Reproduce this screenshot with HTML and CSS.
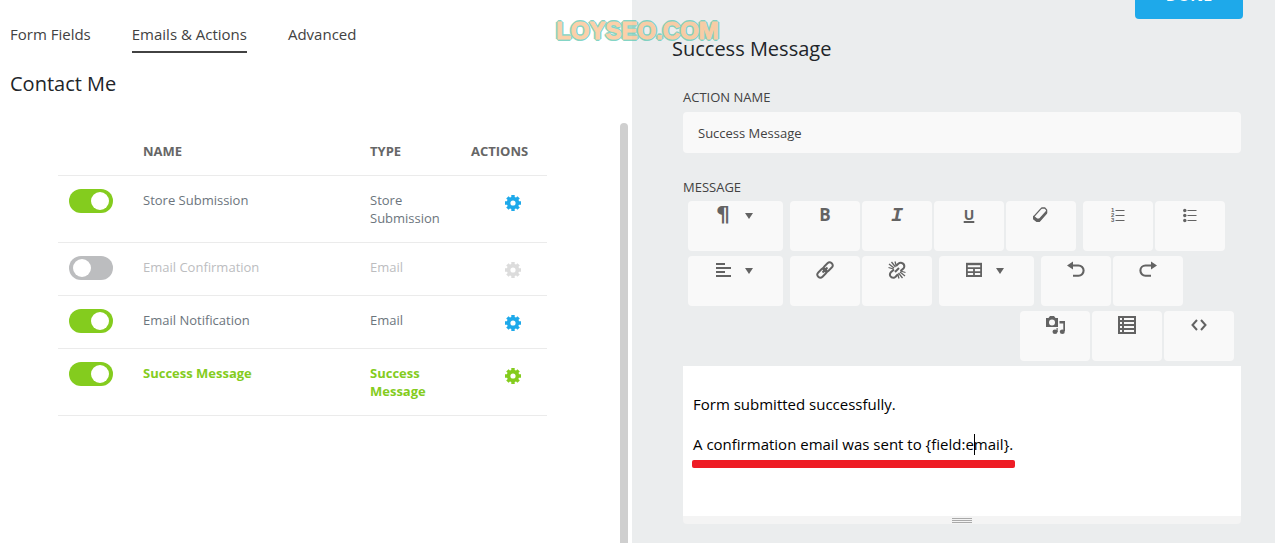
FILE: index.html
```html
<!DOCTYPE html>
<html lang="en">
<head>
  <meta charset="UTF-8">
  <title>Contact Me</title>
  <link rel="stylesheet" href="styles.css">
</head>
<body>
<!-- shared icons -->
<svg class="sprite" width="0" height="0">
  <symbol id="gear" viewBox="0 0 16 16">
    <circle cx="8" cy="8" r="4.4" fill="none" stroke="currentColor" stroke-width="3.6"/>
    <path d="M8 0v3M8 13v3M0 8h3M13 8h3M2.4 2.4l2 2M11.6 11.6l2 2M13.6 2.4l-2 2M2.4 13.6l2-2" stroke="currentColor" stroke-width="3.4" fill="none"/>
  </symbol>
  <symbol id="caret" viewBox="0 0 10 8">
    <path d="M1 1h8L5 7z" fill="currentColor"/>
  </symbol>
</svg>

<div class="builder">
  <main class="main">
    <nav class="tabs">
      <a href="#">Form Fields</a>
      <a href="#" class="current">Emails &amp; Actions</a>
      <a href="#">Advanced</a>
    </nav>
    <h1 class="title">Contact Me</h1>
    <div class="scroller">
      <table class="actions">
        <colgroup>
          <col class="col-toggle">
          <col>
          <col class="col-type">
          <col class="col-gear">
        </colgroup>
        <thead>
          <tr><th></th><th>NAME</th><th>TYPE</th><th>ACTIONS</th></tr>
        </thead>
        <tbody>
          <tr>
            <td class="cell-toggle"><input type="checkbox" class="toggle" aria-label="Store Submission" checked></td>
            <td>Store Submission</td>
            <td>Store Submission</td>
            <td class="cell-gear"><button class="gear" aria-label="Settings"><svg width="16" height="16"><use href="#gear"/></svg></button></td>
          </tr>
          <tr class="off">
            <td class="cell-toggle"><input type="checkbox" class="toggle" aria-label="Email Confirmation"></td>
            <td>Email Confirmation</td>
            <td>Email</td>
            <td class="cell-gear"><button class="gear" aria-label="Settings"><svg width="16" height="16"><use href="#gear"/></svg></button></td>
          </tr>
          <tr>
            <td class="cell-toggle"><input type="checkbox" class="toggle" aria-label="Email Notification" checked></td>
            <td>Email Notification</td>
            <td>Email</td>
            <td class="cell-gear"><button class="gear" aria-label="Settings"><svg width="16" height="16"><use href="#gear"/></svg></button></td>
          </tr>
          <tr class="active">
            <td class="cell-toggle"><input type="checkbox" class="toggle" aria-label="Success Message" checked></td>
            <td>Success Message</td>
            <td>Success Message</td>
            <td class="cell-gear"><button class="gear" aria-label="Settings"><svg width="16" height="16"><use href="#gear"/></svg></button></td>
          </tr>
        </tbody>
      </table>
      <div class="scrollbar"></div>
    </div>
  </main>

  <aside class="drawer">
    <header class="drawer-head">
      <button class="done">DONE</button>
    </header>
    <h2 class="drawer-title">Success Message</h2>
    <div class="settings">
      <label class="label" for="name">ACTION NAME</label>
      <input class="field" id="name" type="text" value="Success Message">

      <div class="label" id="message-label">MESSAGE</div>
      <div class="toolbar">
        <div class="group">
          <button class="tool drop" aria-label="Style"><span class="glyph pilcrow">¶</span><svg width="10" height="8"><use href="#caret"/></svg></button>
        </div>
        <div class="group">
          <button class="tool"><span class="glyph bold">B</span></button>
          <button class="tool"><span class="glyph italic">I</span></button>
          <button class="tool"><span class="glyph underline">U</span></button>
          <button class="tool" aria-label="Clear">
            <svg width="18" height="18" viewBox="0 0 18 18" fill="none" stroke="currentColor" stroke-width="1.3" stroke-linejoin="round">
              <path d="M2 10.400L9 2.600q.5-.6 1.200-.6h2.600l1.800 1.900v3L7.400 14.600H4.800L2 12z"/>
              <path d="M1.700 10.500l3.100 2.600h2.600l7-7.600v1.800l-7 8H4.600L1.700 13z" fill="currentColor"/>
            </svg>
          </button>
        </div>
        <div class="group">
          <button class="tool" aria-label="Numbered list">
            <svg width="18" height="18" viewBox="0 0 18 18">
              <path d="M6.500 4.500h9M6.500 9.500h9M6.500 14.500h9" stroke="currentColor"/>
              <g class="digits"><text x="2" y="6">1</text><text x="2" y="11">2</text><text x="2" y="16">3</text></g>
            </svg>
          </button>
          <button class="tool" aria-label="Bulleted list">
            <svg width="18" height="18" viewBox="0 0 18 18">
              <path d="M6.500 4.500h9M6.500 9.500h9M6.500 14.500h9" stroke="currentColor"/>
              <g fill="currentColor"><circle cx="3.800" cy="4.500" r="1.700"/><circle cx="3.800" cy="9.500" r="1.700"/><circle cx="3.800" cy="14.500" r="1.700"/></g>
            </svg>
          </button>
        </div>
        <div class="group">
          <button class="tool drop" aria-label="Align">
            <svg width="18" height="18" viewBox="0 0 18 18"><path d="M2 3h9M2 7h15M2 11h9M2 15h15" stroke="currentColor" stroke-width="2"/></svg>
            <svg width="10" height="8"><use href="#caret"/></svg>
          </button>
        </div>
        <div class="group">
          <button class="tool" aria-label="Link">
            <svg width="18" height="18" viewBox="0 0 18 18" fill="none" stroke="currentColor" stroke-width="1.900">
              <g transform="rotate(-45 9 9)"><rect x="-.5" y="6" width="10.500" height="6" rx="3"/><rect x="8" y="6" width="10.500" height="6" rx="3"/><path d="M5.500 9h7"/></g>
            </svg>
          </button>
          <button class="tool" aria-label="Unlink">
            <svg width="18" height="18" viewBox="0 0 18 18" fill="none" stroke="currentColor">
              <g stroke-width="2"><path d="M8 5l2.300-2.300q1.700-1.500 3.600-.7 2.600 1 2.400 3.600-.1 1-.9 1.900L12.500 10"/><path d="M6 8.500L2.900 11.300q-1.600 1.700-.6 3.700 1.200 2 3.600 1.700.9-.2 1.700-.9L10 13.200"/><path d="M7 11l4-4"/></g>
              <path d="M1 3l5 4M3.500 1l4 5M.5 6.500l5 1.500M7 .5l1.200 4M17 15l-5-4M14.500 17l-4-5M17.500 11.500l-5-1.500M11 17.500l-1.200-4" stroke-width="1.300"/>
            </svg>
          </button>
        </div>
        <div class="group">
          <button class="tool drop" aria-label="Table">
            <svg width="18" height="18" viewBox="0 0 18 18" fill="none" stroke="currentColor" stroke-width="1.800">
              <path d="M1.900 3h14.200v12H1.900zM2 7.200h14M2 11.200h14M9 7v8"/><path d="M1 3h16" stroke-width="2.400"/>
            </svg>
            <svg width="10" height="8"><use href="#caret"/></svg>
          </button>
        </div>
        <div class="group">
          <button class="tool" aria-label="Undo">
            <svg width="18" height="18" viewBox="0 0 18 18"><path d="M5 4.500h6.500a5 5 0 0 1 0 10.200H6" fill="none" stroke="currentColor" stroke-width="2.100"/><path d="M0 4.500L6 .5v8z" fill="currentColor"/></svg>
          </button>
          <button class="tool" aria-label="Redo">
            <svg width="18" height="18" viewBox="0 0 18 18"><path d="M13 4.500H6.500a5 5 0 0 0 0 10.200H12" fill="none" stroke="currentColor" stroke-width="2.100"/><path d="M18 4.500L12 .5v8z" fill="currentColor"/></svg>
          </button>
        </div>
        <div class="group last">
          <button class="tool" aria-label="Media">
            <svg width="20" height="18" viewBox="0 0 20 18" fill="currentColor">
              <path fill-rule="evenodd" d="M1 2h2.500L5 0h4l1.500 2H13v9H1zM7 3.500a3 3 0 1 0 0 6 3 3 0 0 0 0-6z"/>
              <path d="M13.500 5H20v10h-1.700V7.500h-3.800V5z"/>
              <path d="M11.500 12h1.200v4h-1.200z"/><ellipse cx="10" cy="15.800" rx="2.500" ry="2.200"/><ellipse cx="17.300" cy="15.700" rx="2.500" ry="2.200"/>
            </svg>
          </button>
          <button class="tool" aria-label="Merge tags">
            <svg width="20" height="18" viewBox="0 0 20 18"><path d="M1 0h18v18H1z" fill="currentColor"/><path d="M3 3h2M7 3h10M3 7h2M7 7h10M3 11h2M7 11h10M3 15h2M7 15h10" stroke="#f9f9f9" stroke-width="1.800"/></svg>
          </button>
          <button class="tool" aria-label="Code view">
            <svg width="18" height="18" viewBox="0 0 18 18" fill="none" stroke="currentColor" stroke-width="2"><path d="M7 4L2.500 9 7 14M11 4l4.500 5L11 14"/></svg>
          </button>
        </div>
      </div>

      <div class="editor" contenteditable="true" role="textbox" aria-multiline="true" aria-labelledby="message-label">
        <p>Form submitted successfully.</p>
        <p><span class="marked">A confirmation email was sent to {field:e<i class="cursor"></i>mail}.</span></p>
      </div>
      <div class="resize"><span class="grip"></span></div>
    </div>
  </aside>
</div>
<div class="watermark">LOYSEO.COM</div>
</body>
</html>
```

FILE: styles.css
```css
* {
  box-sizing: border-box;
  margin: 0;
  padding: 0;
}

body {
  position: relative;
  font-family: "Open Sans", "Noto Sans", sans-serif;
  font-size: 13px;
  line-height: 18px;
  color: #424242;
  background-color: #fff;
}

button,
input {
  font: inherit;
  color: inherit;
  border: 0;
}

button {
  background: none;
  cursor: pointer;
}

.sprite {
  position: absolute;
}

.builder {
  display: grid;
  grid-template-columns: 632fr 643fr;
  min-height: 100vh;
}

/* left side */
.main {
  display: flex;
  flex-direction: column;
  min-width: 0;
}

.tabs {
  display: flex;
  gap: 41px;
  padding: 21px 10px 0;
}

.tabs a {
  padding-bottom: 4px;
  border-bottom: 2px solid transparent;
  font-size: 15px;
  line-height: 26px;
  color: #424242;
  text-decoration: none;
}

.tabs .current {
  border-color: #424242;
}

.title,
.drawer-title {
  font-size: 20px;
  line-height: 28px;
  font-weight: 500;
  color: #212529;
}

.title {
  padding: 17px 10px 25px;
}

.scroller {
  flex: 1;
  display: flex;
  align-items: stretch;
  padding-right: 4px;
}

.actions {
  flex: 1;
  align-self: flex-start;
  table-layout: fixed;
  border-collapse: collapse;
  margin: 0 73px 0 58px;
}

.col-toggle {
  width: 75px;
}

.col-type {
  width: 101px;
}

.col-gear {
  width: 86px;
}

.actions th {
  padding: 19px 10px 15px;
  font-weight: 700;
  text-align: left;
  color: #666;
}

.actions td {
  padding: 15px 10px;
  vertical-align: top;
  color: #6c757d;
}

.actions tr {
  border-bottom: 1px solid #ebebeb;
}

.actions .cell-toggle {
  padding: 13px 11px 15px;
}

.actions .cell-gear {
  padding: 19px 0 0 44px;
}

.toggle {
  display: block;
  width: 44px;
  height: 24px;
  padding: 3px 4px;
  border-radius: 12px;
  appearance: none;
  background-color: #bcbdbf;
}

.toggle::before {
  content: "";
  display: block;
  width: 18px;
  height: 18px;
  border-radius: 50%;
  background-color: #fff;
}

.toggle:checked {
  background-color: #84cc1e;
}

.toggle:checked::before {
  margin-left: auto;
}

.gear {
  display: block;
  color: #1ea9ea;
}

.gear svg {
  display: block;
}

.off td {
  color: #bcbdbf;
}

.off .gear {
  color: #dcdcdc;
}

.active td {
  font-weight: 700;
  color: #84cc1e;
}

.active .gear {
  color: #84cc1e;
}

.scrollbar {
  width: 8px;
  border-radius: 4px 4px 0 0;
  background-color: #cfcfcf;
}

/* right side */
.drawer {
  min-width: 0;
  background-color: #ebedee;
}

.drawer-head {
  display: flex;
  justify-content: flex-end;
  align-items: flex-end;
  height: 19px;
  padding-right: 32px;
  overflow: hidden;
}

.done {
  flex: none;
  width: 108px;
  padding: 12px 0 11px;
  border-radius: 4px;
  font-size: 16px;
  line-height: 26px;
  font-weight: 700;
  color: #fff;
  background-color: #1ea9ea;
}

.drawer-title {
  padding: 16px 40px 0;
}

.settings {
  padding: 25px 34px 19px 51px;
}

.label {
  display: block;
  margin-bottom: 6px;
  font-size: 13px;
  line-height: 18px;
}

.field {
  display: block;
  width: 100%;
  height: 41px;
  margin-bottom: 25px;
  padding: 0 15px;
  border-radius: 4px;
  background-color: #f9f9f9;
}

.toolbar {
  display: flex;
  flex-wrap: wrap;
  gap: 5px 7px;
  margin-top: -1px;
  padding: 0 7px 5px 5px;
  color: #636363;
}

.group {
  display: flex;
  gap: 2px;
}

.last {
  margin-left: auto;
}

.tool {
  display: flex;
  justify-content: center;
  align-items: flex-start;
  width: 70px;
  height: 50px;
  padding-top: 5px;
  border-radius: 4px;
  background-color: #f9f9f9;
}

.drop {
  gap: 12px;
  width: 95px;
  padding-right: 3px;
}

.drop svg:last-child {
  margin-top: 6px;
}

.glyph {
  width: 18px;
  font-size: 17px;
  line-height: 18px;
  font-weight: 700;
}

.pilcrow {
  font-family: "DejaVu Sans", sans-serif;
  font-size: 22px;
}

.italic {
  font-family: "Liberation Mono", monospace;
  font-size: 20px;
  line-height: 20px;
  font-style: italic;
}

.underline {
  font-size: 14px;
  text-decoration: underline;
  text-decoration-thickness: 2px;
}

.digits {
  font-family: "Liberation Sans", sans-serif;
  font-size: 6px;
  font-weight: 700;
  fill: currentColor;
}

.editor {
  min-height: 150px;
  padding: 28px 10px 42px;
  background-color: #fff;
  font-size: 15px;
  line-height: 20px;
  color: #000;
}

.editor p + p {
  margin-top: 20px;
}

.marked {
  position: relative;
}

/* red marker under the merge tag line */
.marked::after {
  content: "";
  position: absolute;
  left: -1px;
  right: -2px;
  bottom: -14px;
  height: 8px;
  border-radius: 2px;
  background-color: #ee1c25;
}

.cursor {
  position: absolute;
  width: 1px;
  height: 21px;
  background-color: #000;
}

.resize {
  display: flex;
  justify-content: center;
  height: 8px;
  padding-top: 2px;
  border-radius: 0 0 4px 4px;
  background-color: #f4f4f4;
}

.grip {
  width: 20px;
  height: 5px;
  border-top: 1px solid #a9a9a9;
  border-bottom: 1px solid #a9a9a9;
  background: linear-gradient(#a9a9a9, #a9a9a9) center / 100% 1px no-repeat;
}

.watermark {
  position: absolute;
  top: 17px;
  left: 0;
  right: 0;
  font-family: "Liberation Sans", Arial, sans-serif;
  font-size: 24px;
  line-height: 28px;
  font-weight: 700;
  text-align: center;
  color: #fcc594;
  -webkit-text-stroke: 1px #fcc594;
  text-shadow: 2px 0 #66cbb8, -2px 0 #66cbb8, 0 2px #66cbb8, 0 -2px #66cbb8, 1px 1px #66cbb8, -1px 1px #66cbb8, 1px -1px #66cbb8, -1px -1px #66cbb8;
  opacity: .8;
  pointer-events: none;
}
```
